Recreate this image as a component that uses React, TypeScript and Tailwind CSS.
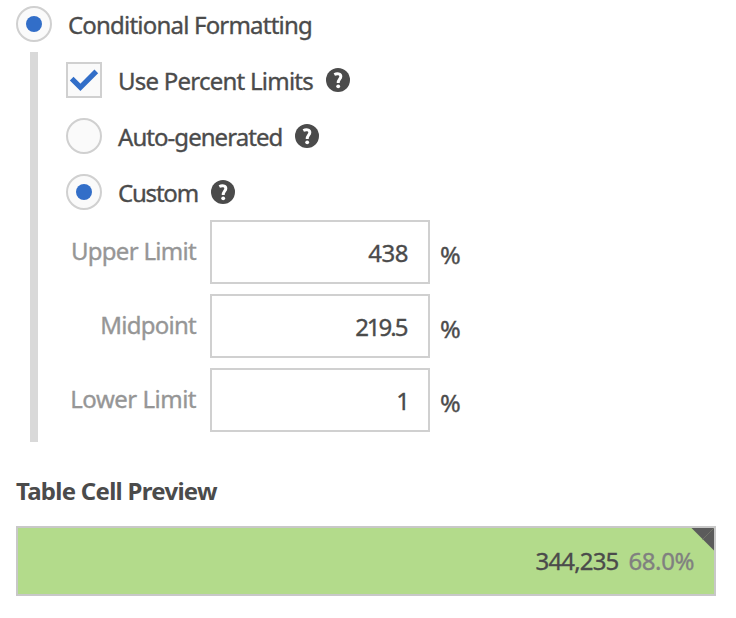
import React from "react";

function Radio({ checked = false }: { checked?: boolean }) {
  return (
    <span className="flex size-9 shrink-0 items-center justify-center rounded-full border-2 border-[#d0d0d0] bg-[#fafafa]">
      {checked && <span className="size-4 rounded-full bg-[#326ec8]" />}
    </span>
  );
}

function Checkbox() {
  return (
    <span className="flex size-9 shrink-0 items-center justify-center border-2 border-[#d0d0d0] bg-[#fafafa]">
      <svg width="32" height="32" viewBox="0 0 32 32" fill="none">
        <path d="M3.7 14.7L12.4 23.4L28.3 7.3" stroke="#326ec8" strokeWidth="5.2" />
      </svg>
    </span>
  );
}

function Help({ className }: { className: string }) {
  return (
    <svg width="24" height="24" viewBox="0 0 24 24" className={`shrink-0 ${className}`}>
      <circle cx="12" cy="12" r="12" fill="#4b4b4b" />
      <path d="M8.3 6.5C11 5.2 15 5.4 14.8 8.6C14.6 11.1 12 11.6 12.2 15" fill="none" stroke="#fff" strokeWidth="3" />
      <circle cx="12.2" cy="18.3" r="1.9" fill="#fff" />
    </svg>
  );
}

function LimitRow({ label, value, labelClass, valueClass }: { label: string; value: string; labelClass: string; valueClass: string }) {
  return (
    <div className="flex h-16 items-center">
      <label className={`w-[130px] pb-0.5 text-right text-[#969696] ${labelClass}`}>{label}</label>
      <div className="ml-3.5 flex h-16 w-[220px] items-center justify-end border-2 border-[#d0d0d0] bg-white pt-0.5 pr-5">
        <span className={valueClass}>{value}</span>
      </div>
      <span className="ml-2.5 inline-block origin-left scale-x-[1.04] pt-1.5 text-[24px]">%</span>
    </div>
  );
}

export default function App() {
  return (
    <main className="h-[618px] w-[736px] bg-white px-4 pt-1.5 font-['Noto_Sans','Open_Sans',sans-serif] text-[24px] leading-9 whitespace-nowrap text-[#4b4b4b] [-webkit-text-stroke:0.35px]">
      <div className="flex h-9 items-center">
        <Radio checked />
        <span className="ml-4 pt-0.5 tracking-[-0.8px]">Conditional Formatting</span>
      </div>
      <section className="mt-2.5 ml-3.5 h-[390px] border-l-8 border-[#d9d9d9] pt-2.5 pl-7">
        <div className="flex h-9 items-center">
          <Checkbox />
          <span className="ml-4 w-[196px] pt-0.5 tracking-[-0.76px]">Use Percent Limits</span>
          <Help className="ml-[11.5px]" />
        </div>
        <div className="mt-5 flex h-9 items-center">
          <Radio />
          <span className="ml-4 w-[165px] pt-0.5 tracking-[-0.95px]">Auto-generated</span>
          <Help className="ml-3" />
        </div>
        <div className="mt-5 flex h-9 items-center">
          <Radio checked />
          <span className="ml-4 w-[81px] pt-0.5 tracking-[-1.2px]">Custom</span>
          <Help className="ml-3" />
        </div>
        <div className="mt-2.5 flex flex-col gap-2.5">
          <LimitRow label="Upper Limit" value="438" labelClass="tracking-[-0.7px]" valueClass="tracking-[-0.5px]" />
          <LimitRow label="Midpoint" value="219.5" labelClass="tracking-[-0.75px]" valueClass="mr-[1.5px] tracking-[-2px]" />
          <LimitRow label="Lower Limit" value="1" labelClass="tracking-[-0.5px]" valueClass="-mr-0.5" />
        </div>
      </section>
      <h2 className="mt-[31px] h-9 text-[24px] font-bold tracking-[-0.72px] [-webkit-text-stroke:0px]">Table Cell Preview</h2>
      <div className="relative mt-[17px] flex h-[70px] w-[700px] items-center justify-end border-2 border-[#c8c8c8] bg-[#b3db8b] pr-5">
        <span className="tracking-[-0.85px]">344,235</span>
        <span className="ml-2.5 tracking-[-0.4px] text-[#808080]">68.0%</span>
        <svg className="absolute top-0 right-0" width="23" height="23" viewBox="0 0 23 23">
          <path d="M0.5 0H23V22.5Z" fill="#5b5b5b" />
          <path d="M11.5 11.5L23 0" stroke="#77796f" strokeWidth="0.8" />
        </svg>
      </div>
    </main>
  );
}
